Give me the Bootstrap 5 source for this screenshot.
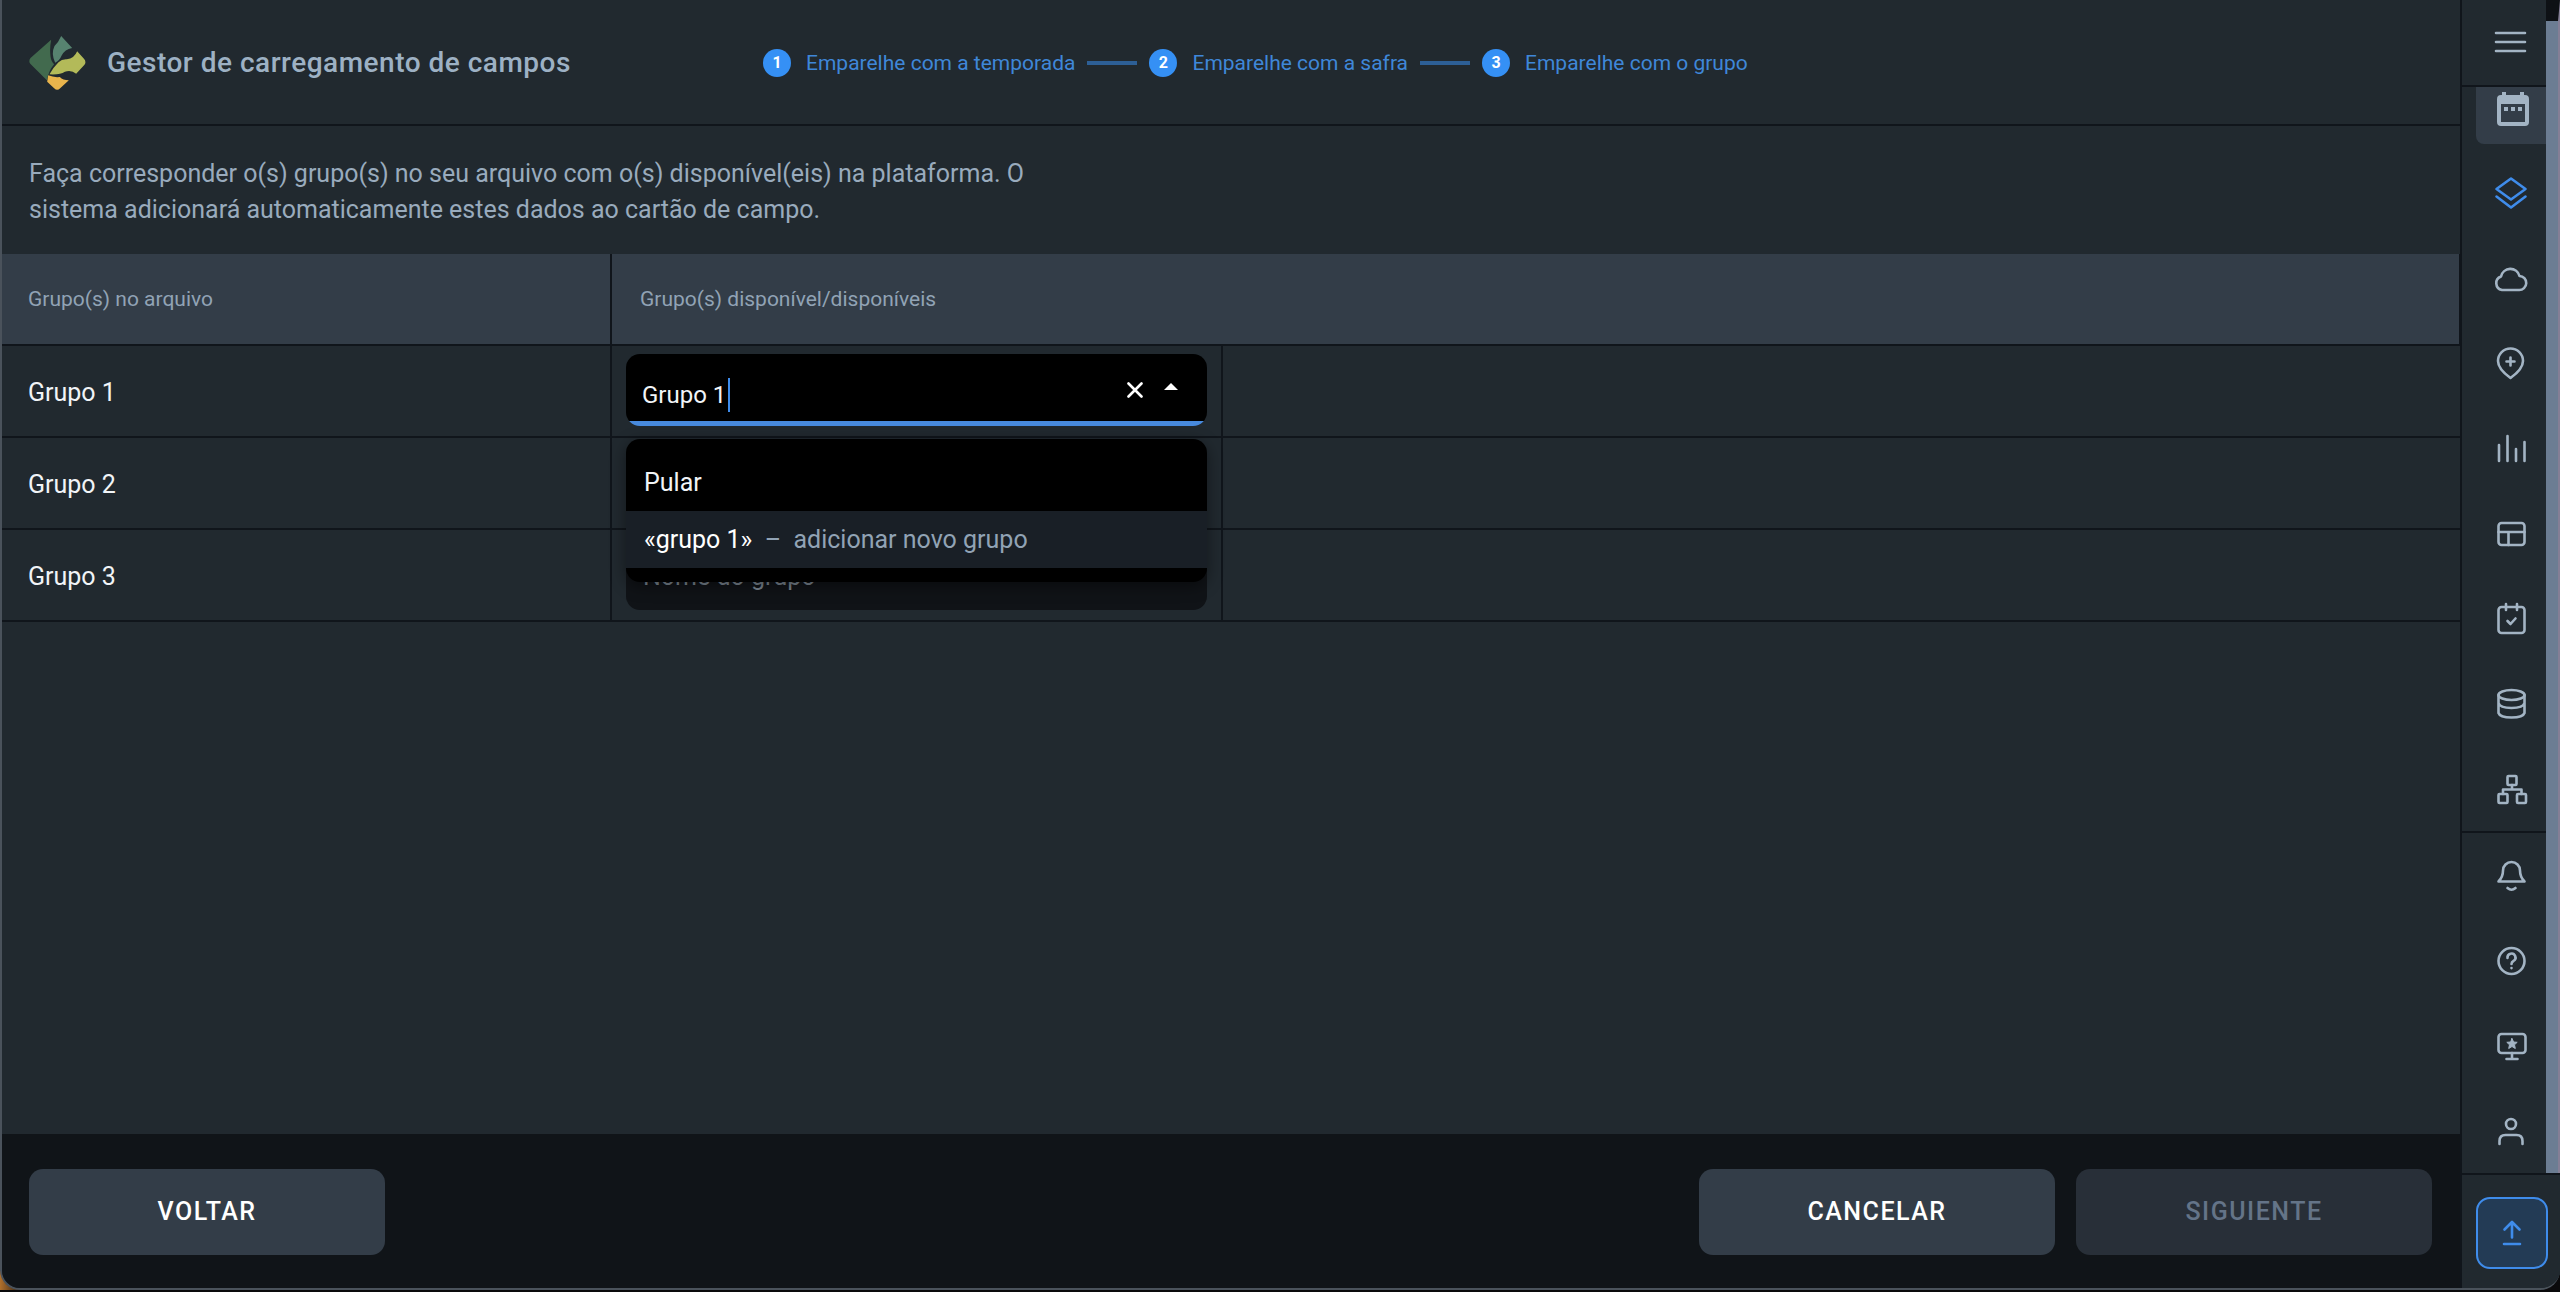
<!DOCTYPE html>
<html lang="pt">
<head>
<meta charset="utf-8">
<meta name="viewport" content="width=device-width, initial-scale=1">
<title>Gestor de carregamento de campos</title>
<link href="https://cdn.jsdelivr.net/npm/bootstrap@5.3.0/dist/css/bootstrap.min.css" rel="stylesheet">
<style>
  :root { --bg:#21292f; --line:#10151b; --panel:#333d48; --soft:#9db1c4; --blue:#3f8ceb; }
  body { background:#0a0a0c linear-gradient(90deg,#b0702c 0,#0a0a0c 26px) no-repeat; font-family:Roboto,"Noto Sans",sans-serif; font-size:25px; line-height:36px; color:#f1f4f7; }
  .app-window { min-height:calc(100vh - 2px); border:solid #4a525b; border-width:0 0 2px 2px; border-radius:0 0 20px 20px; background:var(--bg); overflow:hidden; }
  .app-header { height:126px; padding:2px 0 0 27px; border-bottom:2px solid var(--line); }
  .app-title { font-size:28px; line-height:36px; font-weight:500; color:var(--soft); margin:0; width:677px; padding-left:21px; letter-spacing:.5px; }
  .logo { width:57px; height:54px; }
  .step-item { color:#3f87d8; font-size:21px; gap:15px; }
  .step-num { width:28px; height:28px; border-radius:50%; background:#3590f5; color:#fff; font-size:16px; font-weight:700; line-height:28px; text-align:center; }
  .step-line { width:50px; height:4px; background:#2d5f96; margin:0 12px; }
  .intro { color:#99abbd; padding:30px 27px 26px; margin:0; max-width:1060px; }
  .map-table { table-layout:fixed; border-collapse:separate; border-spacing:0; width:100%; }
  .map-table th, .map-table td { height:92px; border-bottom:2px solid var(--line); border-right:2px solid var(--line); padding:3px 26px 0; vertical-align:middle; font-weight:400; }
  .map-table th { padding-top:0; background:var(--panel); color:#91a3b5; font-size:21px; }
  .map-table tr > :last-child { border-right-width:0; }
  .map-table thead tr > :last-child { border-right-width:1px; padding-left:28px; }
  .map-table td.pick { padding:0 14px 2px; }
  .combo { height:72px; border-radius:14px; background:#101317; overflow:hidden; }
  .combo input { background:transparent; border:0; outline:0; color:#f1f4f7; width:100%; height:72px; padding:4px 17px 0; font-size:25px; }
  .combo input::placeholder { color:#7c8792; opacity:1; }
  .combo.open { background:#000 linear-gradient(#478ade,#478ade) bottom/100% 5px no-repeat; padding:0 18px 5px 0; }
  .combo.open input { height:67px; padding:14px 16px 0; font-size:24px; }
  .combo button { background:none; border:0; padding:0; margin-top:5px; width:36px; height:36px; display:flex; align-items:center; justify-content:center; flex:none; }
  .text-caret { position:absolute; left:102px; top:24px; width:2px; height:34px; background:var(--blue); }
  .drop { position:absolute; left:0; right:0; top:85px; z-index:5; background:#000; border-radius:14px; padding:15px 0 14px; margin:0; list-style:none; box-shadow:0 4px 16px rgba(0,0,0,.45); }
  .drop li { height:57px; line-height:57px; padding:0 18px; }
  .drop li.active-option { background:#191f26; color:#91a3b5; }
  .app-footer { background:#101418; padding:35px 28px 33px 27px; gap:21px; }
  .act { width:356px; height:86px; border-radius:14px; border:0; background:var(--panel); color:#fff; font-size:25px; font-weight:500; letter-spacing:1.5px; }
  .act:disabled { background:#282f38; color:#647488; opacity:1; }
  .side { width:100px; border-left:2px solid var(--line); background:var(--bg); }
  .side svg { fill:none; stroke:#a3b4c4; stroke-width:2.6; stroke-linecap:round; stroke-linejoin:round; width:40px; height:40px; display:block; }
  .side-body { width:84px; }
  .side-track { width:14px; background:#6c7d93; border-right:2px solid #857f96; border-top:21px solid #0e1115; }
  .side-btn { height:85px; width:100%; border:0; background:none; padding:0 0 0 14px; display:flex; align-items:center; justify-content:center; }
  .menu-btn { height:87px; padding-bottom:2px; border-bottom:2px solid var(--line); }
  .side-btn.current { height:57px; width:70px; margin:0 0 7px 14px; padding:0 0 13px; background:var(--panel); border-radius:0 0 0 8px; }
  .side-btn.rule { height:87px; border-bottom:2px solid var(--line); }
  .side-end { border-top:2px solid var(--line); }
  .upload { width:72px; height:72px; border:2px solid var(--blue); border-radius:14px; background:#233b55; padding:0; display:flex; align-items:center; justify-content:center; margin:22px 0 19px 14px; }
  .side svg.blue { stroke:var(--blue); }
</style>
</head>
<body>
<div class="app-window d-flex">
  <main class="flex-grow-1 d-flex flex-column">
    <header class="app-header d-flex align-items-center">
      <svg class="logo" viewBox="27 25 170 162" aria-hidden="true">
        <path fill="#426a4e" d="M93 36Q88 62 91 86Q93 102 102 110Q86 128 80 158L31 109Q24 101 31 91Z"/>
        <path fill="#578370" d="M123 25L156 61Q134 65 124 84Q118 99 105 105Q92 78 103 55Q115 44 123 25Z"/>
        <path fill="#b3ba59" d="M171 71L192 94Q199 103 193 111L168 138Q154 126 134 132Q120 142 88 140Q98 121 115 104Q125 94 140 95Q162 93 171 71Z"/>
        <path fill="#e9b44c" d="M84 143Q101 150 119 148Q128 158 146 158L120 182Q111 191 102 182L81 162Z"/>
      </svg>
      <h1 class="app-title">Gestor de carregamento de campos</h1>
      <nav class="d-flex align-items-center" aria-label="Etapas">
        <div class="step-item d-flex align-items-center"><span class="step-num">1</span>Emparelhe com a temporada</div>
        <span class="step-line"></span>
        <div class="step-item d-flex align-items-center"><span class="step-num">2</span>Emparelhe com a safra</div>
        <span class="step-line"></span>
        <div class="step-item d-flex align-items-center"><span class="step-num">3</span>Emparelhe com o grupo</div>
      </nav>
    </header>

    <p class="intro">Faça corresponder o(s) grupo(s) no seu arquivo com o(s) disponível(eis) na plataforma. O sistema adicionará automaticamente estes dados ao cartão de campo.</p>

    <table class="map-table">
      <colgroup><col style="width:610px"><col style="width:611px"><col></colgroup>
      <thead><tr><th scope="col">Grupo(s) no arquivo</th><th scope="col" colspan="2">Grupo(s) disponível/disponíveis</th></tr></thead>
      <tbody>
        <tr>
          <td><label for="g1">Grupo 1</label></td>
          <td class="pick">
            <div class="position-relative">
              <div class="combo open d-flex align-items-center">
                <input id="g1" type="text" value="Grupo 1" autocomplete="off">
                <span class="text-caret"></span>
                <button type="button" aria-label="Limpar"><svg width="16" height="16" viewBox="0 0 16 16" stroke="#fff" stroke-width="2.6" stroke-linecap="round"><path d="M1.5 1.5L14.5 14.5M14.5 1.5L1.5 14.5"/></svg></button>
                <button type="button" aria-label="Fechar lista"><svg width="14" height="14" viewBox="0 0 14 14" fill="#fff"><path d="M0 7L7 0L14 7Z"/></svg></button>
              </div>
              <ul class="drop" role="listbox" aria-label="Grupos">
                <li role="option">Pular</li>
                <li role="option" class="active-option"><span class="text-white">«grupo 1»</span>&nbsp; –&nbsp; adicionar novo grupo</li>
              </ul>
            </div>
          </td>
          <td></td>
        </tr>
        <tr><td><label for="g2">Grupo 2</label></td><td class="pick"><div class="combo"><input id="g2" type="text" placeholder="Nome do grupo"></div></td><td></td></tr>
        <tr><td><label for="g3">Grupo 3</label></td><td class="pick"><div class="combo"><input id="g3" type="text" placeholder="Nome do grupo"></div></td><td></td></tr>
      </tbody>
    </table>

    <footer class="app-footer d-flex mt-auto">
      <button type="button" class="act me-auto">VOLTAR</button>
      <button type="button" class="act">CANCELAR</button>
      <button type="button" class="act" disabled>SIGUIENTE</button>
    </footer>
  </main>

  <aside class="side d-flex flex-column flex-shrink-0">
    <div class="d-flex">
      <div class="side-body">
        <button class="side-btn menu-btn" aria-label="Menu"><svg viewBox="0 0 40 40"><path d="M5 11H34M5 20H34M5 29H34"/></svg></button>
        <button class="side-btn current" aria-label="Temporada"><svg viewBox="0 0 40 40"><path d="M13 3V8M31 3V8" stroke-width="4" stroke-linecap="butt"/><rect x="8" y="8" width="28" height="27" rx="2" stroke-width="4"/><path d="M7 8H37V15H7Z" fill="#a3b4c4" stroke="none"/><path d="M13 20H17M20 20H24M27 20H31" stroke-width="4" stroke-linecap="butt"/></svg></button>
        <button class="side-btn" aria-label="Campos"><svg class="blue" viewBox="0 0 40 40"><path d="M20 4.5L34.500 15L20 25.500L5.500 15ZM5.500 22.500L20 33.500L34.500 22.500"/></svg></button>
        <button class="side-btn" aria-label="Clima"><svg viewBox="0 0 40 40"><path d="M11 31H28A7 7 0 0 0 28.500 17A9.500 9.500 0 0 0 10 17.500A7 7 0 0 0 11 31Z"/></svg></button>
        <button class="side-btn" aria-label="Notas"><svg viewBox="0 0 40 40"><path d="M19.500 34Q7 25 7 17A12.500 12.500 0 0 1 32 17Q32 25 19.500 34ZM15.500 17.500H23.500M19.500 13.500V21.500"/></svg></button>
        <button class="side-btn" aria-label="Relatórios"><svg viewBox="0 0 40 40"><path d="M8 16V32M16.500 7V32M25 20V32M33.500 13V32"/></svg></button>
        <button class="side-btn" aria-label="Tabelas"><svg viewBox="0 0 40 40"><rect x="7.500" y="9" width="26" height="22" rx="3"/><path d="M7.500 18H33.500M17.500 18V31"/></svg></button>
        <button class="side-btn" aria-label="Tarefas"><svg viewBox="0 0 40 40"><rect x="7.500" y="8" width="26" height="26" rx="3"/><path d="M15 5V11M26 5V11M16.500 22L19.500 25L24.500 19.500"/></svg></button>
        <button class="side-btn" aria-label="Dados"><svg viewBox="0 0 40 40"><ellipse cx="20.500" cy="11" rx="13" ry="5"/><path d="M7.500 11V29Q9 33.500 20.500 33.500T33.500 29V11M7.500 19Q9 24 20.500 24T33.500 19"/></svg></button>
        <button class="side-btn rule" aria-label="Organização"><svg viewBox="0 0 40 40"><rect x="16.500" y="7" width="9" height="9" rx="1"/><rect x="7.500" y="25" width="9" height="9" rx="1"/><rect x="26" y="25" width="9" height="9" rx="1"/><path d="M21 16V20.500M12 25V20.500H30.500V25"/></svg></button>
        <button class="side-btn" aria-label="Notificações"><svg viewBox="0 0 40 40"><path d="M7.500 25.500Q12 21 12 14.500A8.500 8.500 0 0 1 29 14.500Q29 21 33.500 25.500ZM16.500 32Q20.500 35.500 24.500 32"/></svg></button>
        <button class="side-btn" aria-label="Ajuda"><svg viewBox="0 0 40 40"><circle cx="20.500" cy="20" r="13"/><path d="M16.500 17A4 4 0 1 1 22.500 20Q20.500 21 20.500 23M20.500 27V27.100"/></svg></button>
        <button class="side-btn" aria-label="Demonstração"><svg viewBox="0 0 40 40"><rect x="7.500" y="8" width="27" height="19" rx="3"/><path d="M21 27V33M15.500 33H26.500"/><path d="M21 12.500L22.600 16L26.200 16.300L23.500 18.800L24.300 22.500L21 20.500L17.700 22.500L18.500 18.800L15.800 16.300L19.400 16Z" fill="#a3b4c4" stroke-width="1"/></svg></button>
        <button class="side-btn" aria-label="Conta"><svg viewBox="0 0 40 40"><circle cx="20" cy="13" r="5"/><path d="M8.500 33V30Q8.500 24 14.500 24H25.500Q31.500 24 31.500 30V33"/></svg></button>
      </div>
      <div class="side-track"></div>
    </div>
    <div class="side-end flex-grow-1">
      <button class="upload" aria-label="Carregar"><svg class="blue" viewBox="0 0 40 40"><path d="M20 24.500V9.500M12.500 16.500L20 9L27.500 16.500M12 31H28"/></svg></button>
    </div>
  </aside>
</div>
<script src="https://cdn.jsdelivr.net/npm/bootstrap@5.3.0/dist/js/bootstrap.bundle.min.js"></script>
</body>
</html>
